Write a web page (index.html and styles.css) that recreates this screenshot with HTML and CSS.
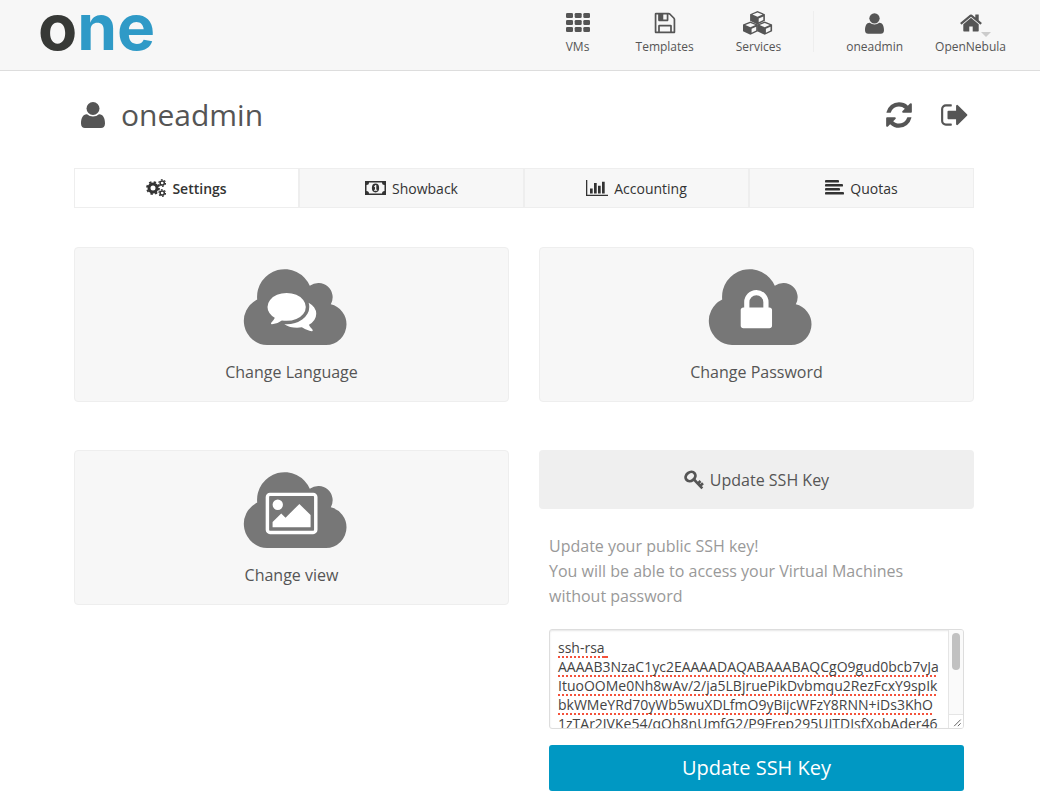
FILE: index.html
```html
<!DOCTYPE html>
<html lang="en">
<head>
<meta charset="utf-8">
<title>OpenNebula - oneadmin</title>
<link rel="stylesheet" href="styles.css">
</head>
<body>
<svg class="sprite" aria-hidden="true">
  <symbol id="user" viewBox="0 0 24 26"><circle cx="12" cy="6.500" r="6.500"/><path d="M6 12.200Q8.500 14.400 12 14.400Q15.500 14.400 18 12.200C22 12 24 16 24 21.500C24 24.500 22.300 26 20 26H4C1.700 26 0 24.500 0 21.500C0 16 2 12 6 12.200Z"/></symbol>
  <path id="cloud" d="M24 76A24 24 0 0 1 14.200 30.500A27.500 27.500 0 0 1 66.800 16.800A14.300 14.300 0 0 1 87.800 35.300A20.500 20.500 0 0 1 103.500 55.500A20.500 20.500 0 0 1 83 76Z"/>
</svg>

<header class="topbar">
  <a class="logo" href="#"><span class="logo-dark">o</span>ne</a>
  <nav class="nav">
    <div class="nav-main">
      <a class="nav-item" href="#">
        <svg class="nav-icon" viewBox="0 0 24 24" width="24" height="24"><g><rect x="0" y="2" width="7" height="5" rx="1.300"/><rect x="8.700" y="2" width="7" height="5" rx="1.300"/><rect x="17.300" y="2" width="6.700" height="5" rx="1.300"/><rect x="0" y="9" width="7" height="5" rx="1.300"/><rect x="8.700" y="9" width="7" height="5" rx="1.300"/><rect x="17.300" y="9" width="6.700" height="5" rx="1.300"/><rect x="0" y="16" width="7" height="5" rx="1.300"/><rect x="8.700" y="16" width="7" height="5" rx="1.300"/><rect x="17.300" y="16" width="6.700" height="5" rx="1.300"/></g></svg>
        <span>VMs</span>
      </a>
      <a class="nav-item" href="#">
        <svg class="nav-icon" viewBox="0 0 1792 1792" width="24" height="24"><path d="M512 1536h768v-384h-768v384zm896 0h128v-896q0-14-10-38.500t-20-34.500l-281-281q-10-10-34-20t-39-10v416q0 40-28 68t-68 28h-576q-40 0-68-28t-28-68v-416h-128v1280h128v-416q0-40 28-68t68-28h832q40 0 68 28t28 68v416zm-384-928v-320q0-13-9.500-22.500t-22.500-9.500h-192q-13 0-22.500 9.500t-9.500 22.500v320q0 13 9.500 22.500t22.500 9.500h192q13 0 22.500-9.500t9.500-22.500zm640 32v928q0 40-28 68t-68 28h-1344q-40 0-68-28t-28-68v-1344q0-40 28-68t68-28h928q40 0 88 20t76 48l280 280q28 28 48 76t20 88z"/></svg>
        <span>Templates</span>
      </a>
      <a class="nav-item" href="#">
        <svg class="nav-icon" viewBox="0 0 30 24" width="30" height="24">
          <defs><g id="cube"><path d="M7.400 0L14.800 3.200V9.800L7.400 13.400L0 9.800V3.200Z"/><path class="face" d="M7.400 1.500L12.500 3.600L7.400 5.800L2.300 3.600ZM8.600 7.400L13.200 5.400V9L8.600 11.300Z"/></g></defs>
          <use href="#cube" x="7.100" y="0"/><use href="#cube" x="0" y="10.400"/><use href="#cube" x="14.300" y="10.400"/>
        </svg>
        <span>Services</span>
      </a>
    </div>
    <div class="nav-user">
      <a class="nav-item" href="#">
        <svg class="nav-icon" viewBox="0 0 24 24" width="24" height="24"><use href="#user" x="2" y="2" width="19" height="21"/></svg>
        <span>oneadmin</span>
      </a>
      <a class="nav-item has-caret" href="#">
        <svg class="nav-icon" viewBox="0 0 1792 1792" width="24" height="24"><path d="M1472 992v480q0 26-19 45t-45 19h-384v-384h-256v384h-384q-26 0-45-19t-19-45v-480q0-1 .5-3t.5-3l575-474 575 474q1 2 1 6zm223-69l-62 74q-8 9-21 11h-3q-13 0-21-7l-692-577-692 577q-12 8-24 7-13-2-21-11l-62-74q-8-10-7-23.500t11-21.500l719-599q32-26 76-26t76 26l244 204v-195q0-14 9-23t23-9h192q14 0 23 9t9 23v408l219 182q10 8 11 21.500t-7 23.500z"/></svg>
        <span>OpenNebula</span>
      </a>
    </div>
  </nav>
</header>

<main class="page">
  <div class="title-row">
    <h1 class="title"><svg width="24" height="26"><use href="#user"/></svg>oneadmin</h1>
    <div class="actions">
      <button type="button" aria-label="Refresh"><svg viewBox="0 0 1792 1792" width="30" height="30"><path d="M1639 1056q0 5-1 7-64 268-268 434.500t-478 166.500q-146 0-282.500-55t-243.500-157l-129 129q-19 19-45 19t-45-19-19-45v-448q0-26 19-45t45-19h448q26 0 45 19t19 45-19 45l-137 137q71 66 161 102t187 36q134 0 250-65t186-179q11-17 53-117 8-23 30-23h192q13 0 22.500 9.500t9.500 22.500zm25-800v448q0 26-19 45t-45 19h-448q-26 0-45-19t-19-45 19-45l138-138q-148-137-349-137-134 0-250 65t-186 179q-11 17-53 117-8 23-30 23h-199q-13 0-22.500-9.500t-9.500-22.500v-7q65-268 270-434.500t480-166.500q146 0 284 55.500t245 156.500l130-129q19-19 45-19t45 19 19 45z"/></svg></button>
      <button type="button" aria-label="Sign out"><svg viewBox="0 0 1792 1792" width="30" height="30"><path d="M704 1440q0 4 1 20t.5 26.500-3 23.500-10 19.500-20.500 6.500h-320q-119 0-203.500-84.500t-84.500-203.500v-704q0-119 84.500-203.500t203.500-84.500h320q13 0 22.500 9.500t9.500 22.500q0 4 1 20t.5 26.500-3 23.500-10 19.500-20.500 6.500h-320q-66 0-113 47t-47 113v704q0 66 47 113t113 47h312l11.500 1 11.500 3 8 5.500 7 9 2 13.500zm928-544q0 26-19 45l-544 544q-19 19-45 19t-45-19-19-45v-288h-448q-26 0-45-19t-19-45v-384q0-26 19-45t45-19h448v-288q0-26 19-45t45-19 45 19l544 544q19 19 19 45z"/></svg></button>
    </div>
  </div>

  <nav class="tabs">
    <a class="tab active" href="#"><svg viewBox="0 0 20 18" width="20" height="18"><g class="line"><circle cx="7" cy="9" r="4" stroke-width="3"/><circle cx="7" cy="9" r="6" stroke-width="1.800" stroke-dasharray="2.400 2.312"/><circle cx="16.200" cy="4" r="2.100" stroke-width="1.500"/><circle cx="16.200" cy="4" r="3.300" stroke-width="1.200" stroke-dasharray="1.700 1.756"/><circle cx="16.200" cy="14" r="2.100" stroke-width="1.500"/><circle cx="16.200" cy="14" r="3.300" stroke-width="1.200" stroke-dasharray="1.700 1.756"/></g></svg>Settings</a>
    <a class="tab" href="#"><svg viewBox="0 0 21 18" width="21" height="18"><path fill-rule="evenodd" d="M0 2H21V16H0ZM4 3.500A2.500 2.500 0 0 1 1.500 6V12A2.500 2.500 0 0 1 4 14.500H17A2.500 2.500 0 0 1 19.500 12V6A2.500 2.500 0 0 1 17 3.500Z"/><ellipse cx="10.500" cy="9" rx="3.600" ry="4.400"/><path class="paper" d="M9 7.400L10.400 6H11.300V10.800H12.200V11.800H9V10.800H10V7.800L9.500 8.200Z"/></svg>Showback</a>
    <a class="tab" href="#"><svg viewBox="0 0 22 18" width="22" height="18"><path d="M0 1H1.300V15.700H22V17H0ZM4 9.500H6.700V14.500H4ZM8 4H10.700V14.500H8ZM12 6.700H14.700V14.500H12ZM16 2.700H18.700V14.500H16Z"/></svg>Accounting</a>
    <a class="tab" href="#"><svg viewBox="0 0 19 18" width="19" height="18"><path d="M1 1H13Q14 1 14 2V2.700Q14 3.600 13 3.600H1Q0 3.600 0 2.700V2Q0 1 1 1ZM1 5H17Q18 5 18 6V6.700Q18 7.600 17 7.600H1Q0 7.600 0 6.700V6Q0 5 1 5ZM1 9H14Q15 9 15 10V10.700Q15 11.600 14 11.600H1Q0 11.600 0 10.700V10Q0 9 1 9ZM1 13H18Q19 13 19 14V14.700Q19 15.600 18 15.600H1Q0 15.600 0 14.700V14Q0 13 1 13Z"/></svg>Quotas</a>
  </nav>

  <div class="grid">
    <button type="button" class="card">
      <svg viewBox="-7 0 111 76" width="111" height="76"><use href="#cloud"/><path class="glyph" transform="translate(24.500 17) scale(.0272)" d="M1408 768q0 139-94 257t-256.500 186.500-353.500 68.500q-86 0-176-16-124 88-278 128-36 9-86 16h-3q-11 0-20.500-8t-11.500-21q-1-3-1-6.500t.5-6.500 2-6l2.500-5 3.500-5.500 4-5 4.500-5 4-4.500q5-6 23-25t26-29.500 22.500-29 25-38.500 20.500-44q-124-72-195-177t-71-224q0-139 94-257t256.500-186.500 353.500-68.500 353.500 68.500 256.500 186.500 94 257zm384 256q0 120-71 224.500t-195 176.500q10 24 20.500 44t25 38.500 22.500 29 26 29.500 23 25q1 1 4 4.500t4.500 5 4 5 3.500 5.500l2.500 5 2 6 .5 6.500-1 6.500q-3 14-13 22t-22 7q-50-7-86-16-154-40-278-128-90 16-176 16-271 0-472-132 58 4 88 4 161 0 309-45t264-129q125-92 192-212t67-254q0-77-23-152 129 71 204 178t75 230z"/></svg>
      <span>Change Language</span>
    </button>
    <button type="button" class="card">
      <svg viewBox="-7 0 111 76" width="111" height="76"><use href="#cloud"/><path class="glyph" transform="translate(24 17.500) scale(.0272)" d="M640 768h512v-192q0-106-75-181t-181-75-181 75-75 181v192zm832 96v576q0 40-28 68t-68 28h-960q-40 0-68-28t-28-68v-576q0-40 28-68t68-28h32v-192q0-184 132-316t316-132 316 132 132 316v192h32q40 0 68 28t28 68z"/></svg>
      <span>Change Password</span>
    </button>
    <button type="button" class="card">
      <svg viewBox="-7 0 111 76" width="111" height="76"><use href="#cloud"/><path class="glyph" transform="translate(24.400 17.200) scale(.0270)" d="M576 576q0 80-56 136t-136 56-136-56-56-136 56-136 136-56 136 56 56 136zm1024 384v448h-1408v-192l320-320 160 160 512-512zm96-704h-1600q-13 0-22.500 9.500t-9.500 22.500v1216q0 13 9.500 22.500t22.500 9.500h1600q13 0 22.500-9.500t9.500-22.500v-1216q0-13-9.500-22.500t-22.500-9.500zm160 32v1216q0 66-47 113t-113 47h-1600q-66 0-113-47t-47-113v-1216q0-66 47-113t113-47h1600q66 0 113 47t47 113z"/></svg>
      <span>Change view</span>
    </button>
    <section class="ssh">
      <button type="button" class="ssh-head"><svg viewBox="0 0 20 20" width="20" height="20"><g class="line"><ellipse cx="6.500" cy="6.500" rx="5.200" ry="4.200" stroke-width="2.800" transform="rotate(-38 6.500 6.500)"/><path d="M10 9.500L18.300 18.300M13.500 14L16.500 11M16 16L19 13.200" stroke-width="2.600"/></g></svg>Update SSH Key</button>
      <div class="ssh-body">
        <label class="ssh-text" for="ssh-key">Update your public SSH key!<br>You will be able to access your Virtual Machines without password</label>
        <div class="key-box">
          <textarea id="ssh-key" class="ssh-key" spellcheck="false">ssh-rsa AAAAB3NzaC1yc2EAAAADAQABAAABAQCgO9gud0bcb7vJaItuoOOMe0Nh8wAv/2/ja5LBjruePikDvbmqu2RezFcxY9spIkbkWMeYRd70yWb5wuXDLfmO9yBijcWFzY8RNN+iDs3KhO1zTAr2JVKe54/qOh8nUmfG2/P9Frep295UITDIsfXobAder46</textarea>
          <div class="scrollbar" aria-hidden="true">
            <div class="thumb"></div>
            <svg class="grip" viewBox="0 0 14 14" width="14" height="14"><path class="line" d="M5 12L12 5M9 12L12 9"/></svg>
          </div>
        </div>
        <button type="submit" class="ssh-submit">Update SSH Key</button>
      </div>
    </section>
  </div>
</main>
</body>
</html>
```
FILE: styles.css
```css
* { box-sizing: border-box; }
body {
  margin: 0;
  background: #fff;
  color: #555;
  font-family: "Open Sans", sans-serif;
  font-size: 16px;
}
a { color: inherit; text-decoration: none; }
button { margin: 0; border: 0; background: none; color: inherit; font: inherit; cursor: pointer; }
svg { display: block; flex: none; fill: currentColor; }
.sprite { position: absolute; width: 0; height: 0; }
.line { fill: none; stroke: currentColor; }
.glyph { fill: #fff; }
.face, .paper { fill: #f7f7f7; }

.topbar {
  display: flex;
  justify-content: space-between;
  align-items: flex-start;
  height: 71px;
  padding: 0 34px 0 38px;
  background: #f7f7f7;
  border-bottom: 1px solid #ddd;
}
.logo { color: #2f9ac7; font: 700 64px/54px Inter, sans-serif; }
.logo-dark { color: #373936; }
.nav { display: flex; padding-top: 11px; }
.nav-main, .nav-user { display: flex; }
.nav-main { gap: 42px; padding-right: 32px; }
.nav-user { gap: 32px; padding-left: 32px; height: 41px; border-left: 1px solid #eee; }
.nav-item {
  display: flex;
  flex-direction: column;
  align-items: center;
  gap: 4px;
  min-width: 32px;
  font-size: 12px;
  line-height: 16px;
}
.has-caret { position: relative; }
.has-caret::after {
  content: "";
  position: absolute;
  top: 21px;
  right: 15px;
  border: 5px solid transparent;
  border-top-color: #ccc;
  border-bottom: 0;
}

.page { padding: 24px 66px 19px 74px; }
.title-row { display: flex; justify-content: space-between; align-items: center; padding: 0 4px 0 7px; }
.title { display: flex; align-items: center; gap: 16px; margin: 0; font-size: 30px; font-weight: 400; line-height: 40px; }
.actions { display: flex; gap: 26px; }
.actions button { padding: 0; }

.tabs { display: grid; grid-template-columns: repeat(4, 1fr); margin: 33px 0 39px; }
.tab {
  display: flex;
  align-items: center;
  justify-content: center;
  gap: 6px;
  height: 40px;
  border: 1px solid #eee;
  background: #f7f7f7;
  color: #333;
  font-size: 14px;
}
.tab.active { background: #fff; font-weight: 600; }

.grid { display: grid; grid-template-columns: 1fr 1fr; align-items: start; gap: 48px 30px; }
.card {
  display: flex;
  flex-direction: column;
  align-items: center;
  gap: 14px;
  padding: 21px 16px 16px;
  border: 1px solid #eee;
  border-radius: 4px;
  background: #f7f7f7;
  line-height: 26px;
}
.card svg { color: #777; }
.ssh-head {
  display: flex;
  align-items: center;
  justify-content: center;
  gap: 6px;
  width: 100%;
  height: 59px;
  border-radius: 4px;
  background: #efefef;
}
.ssh-body { padding: 25px 10px 0; }
.ssh-text { display: block; margin-bottom: 20px; color: #999; line-height: 25px; }
.key-box {
  display: flex;
  height: 100px;
  margin-bottom: 16px;
  border: 1px solid #ddd;
  border-radius: 3px;
  box-shadow: inset 0 1px 2px rgba(0, 0, 0, 0.1);
  overflow: hidden;
}
.ssh-key {
  flex: 1;
  min-width: 0;
  padding: 8px 8px 0;
  border: 0;
  background: none;
  color: #444;
  font: 14px/19px "Open Sans", sans-serif;
  text-decoration: underline dotted #f4523b 2px;
  text-decoration-skip-ink: none;
  text-underline-offset: 3px;
  resize: none;
}
.scrollbar {
  display: flex;
  flex-direction: column;
  justify-content: space-between;
  width: 15px;
  border-left: 1px solid #e5e5e5;
  background: #fafafa;
}
.thumb { height: 37px; margin: 3px; border-radius: 4px; background: #c1c1c1; }
.grip { border-top: 1px solid #e5e5e5; background: #fff; }
.ssh-submit {
  display: block;
  width: 100%;
  padding: 9px 16px;
  border-radius: 3px;
  background: #0098c3;
  color: #fff;
  font-size: 20px;
  font-weight: 400;
  line-height: 28px;
}
```
